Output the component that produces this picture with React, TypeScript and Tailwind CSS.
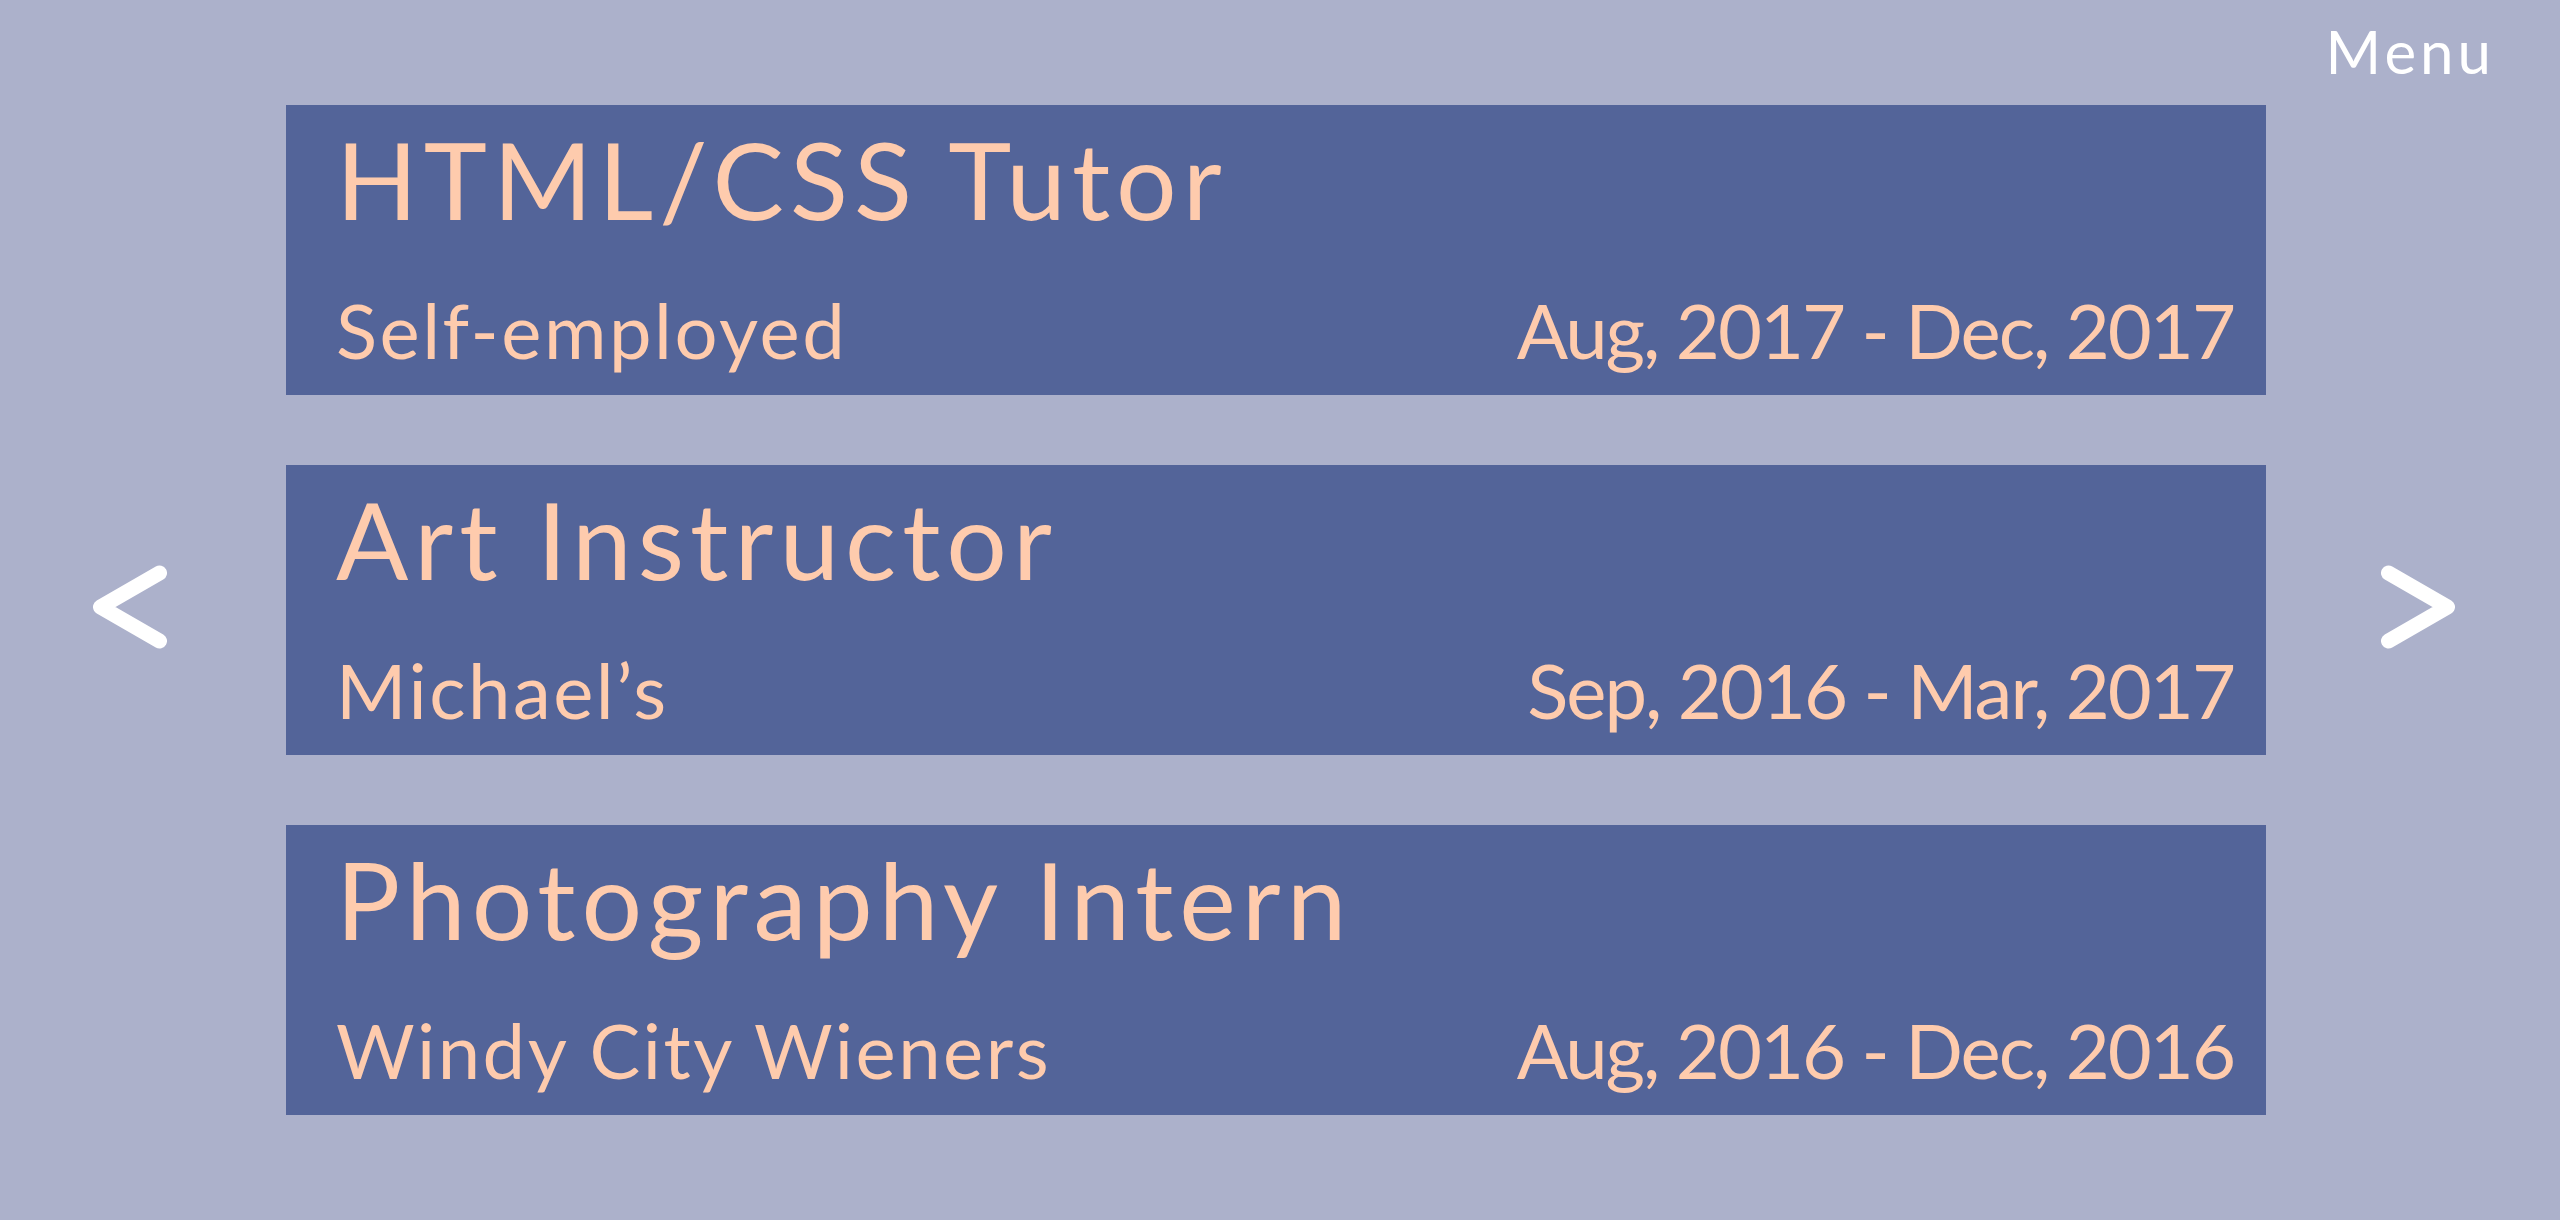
import { ReactNode } from "react";

type Job = {
  title: string;
  company: string;
  dates: string;
};

const jobs: Job[] = [
  { title: "HTML/CSS Tutor", company: "Self-employed", dates: "Aug, 2017 - Dec, 2017" },
  { title: "Art Instructor", company: "Michael\u2019s", dates: "Sep, 2016 - Mar, 2017" },
  { title: "Photography Intern", company: "Windy City Wieners", dates: "Aug, 2016 - Dec, 2016" },
];

function Arrow({ dir }: { dir: "left" | "right" }) {
  const pts = dir === "left" ? "66.5,11 7.5,45 66.5,79" : "7.5,11 66.5,45 7.5,79";
  return (
    <svg width="74" height="90" viewBox="0 0 74 90" className="mb-[6px] cursor-pointer">
      <polyline
        points={pts}
        fill="none"
        stroke="#ffffff"
        strokeWidth="15"
        strokeLinecap="round"
        strokeLinejoin="round"
      />
    </svg>
  );
}

function Card({ job }: { job: Job }) {
  return (
    <div className="h-[290px] w-[1980px] bg-[#536499] flex flex-col justify-between pt-[20px] pb-[27px] pl-[50px] pr-[32px] text-[#fecbad]">
      <h2 className="text-[107px] leading-none font-normal tracking-[6px]">{job.title}</h2>
      <div className="flex items-baseline justify-between text-[76px] leading-none">
        <span className="tracking-[2.5px]">{job.company}</span>
        <span className="tracking-[-2px]">{job.dates}</span>
      </div>
    </div>
  );
}

function Side({ children, className }: { children: ReactNode; className: string }) {
  return <div className={"flex items-center " + className}>{children}</div>;
}

export default function App() {
  return (
    <div className="relative h-[1220px] w-full overflow-hidden bg-[#acb1cb] font-[Lato,sans-serif]">
      {/* nav */}
      <nav className="absolute top-[21px] right-[65px]">
        <a href="#menu" className="text-[60px] leading-none text-white tracking-[4px]">
          Menu
        </a>
      </nav>

      <div className="flex h-full items-center">
        <Side className="w-[286px] pl-[93px]">
          <Arrow dir="left" />
        </Side>

        <div className="flex flex-col gap-[70px]">
          {jobs.map((job) => (
            <Card key={job.title} job={job} />
          ))}
        </div>

        <Side className="w-[294px] pl-[115px]">
          <Arrow dir="right" />
        </Side>
      </div>
    </div>
  );
}
